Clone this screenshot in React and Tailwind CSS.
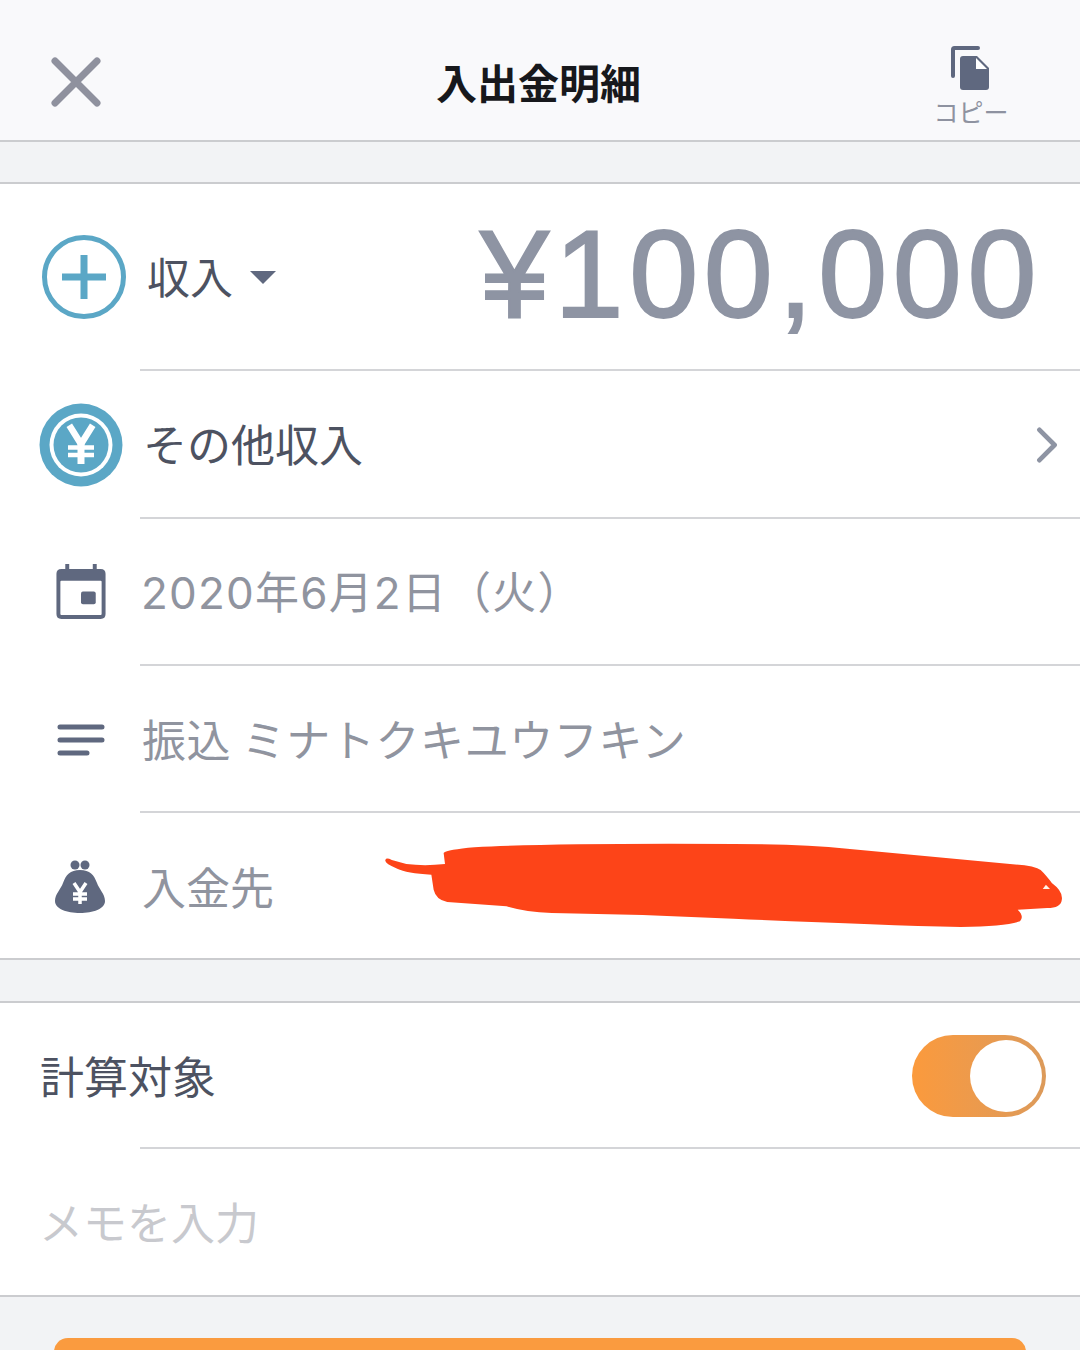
const jp = "font-['Noto_Sans_CJK_JP',sans-serif]";

function Divider() {
  return <div className="ml-[140px] h-[2px] shrink-0 bg-[#d4d5d8]" />;
}

function Edge() {
  return <div className="h-[2px] shrink-0 bg-[#cbcccf]" />;
}

function IconSlot({ children, className = "" }) {
  return <div className={`flex shrink-0 items-center justify-center ${className}`}>{children}</div>;
}

function CloseIcon() {
  return (
    <svg width="50" height="50" viewBox="0 0 50 50" fill="none" stroke="#8f919e" strokeWidth="7" strokeLinecap="round">
      <path d="M4 4 L46 46 M46 4 L4 46" />
    </svg>
  );
}

function CopyIcon() {
  return (
    <svg width="40" height="46" viewBox="0 0 40 46">
      <path d="M2 30 V3.5 Q2 2 3.5 2 H27" fill="none" stroke="#5f687f" strokeWidth="4" strokeLinecap="round" />
      <path d="M12 10 Q9 10 9 13 V41 Q9 44 12 44 H35 Q38 44 38 41 V22 L26 10 Z" fill="#5f687f" />
      <path d="M25 12 V23 H36 Z" fill="#ffffff" />
    </svg>
  );
}

function PlusCircle() {
  return (
    <svg width="86" height="86" viewBox="0 0 86 86" fill="none" stroke="#5ba7c6">
      <circle cx="43" cy="43" r="39.5" strokeWidth="5" />
      <path d="M21 43 H65 M43 21 V65" strokeWidth="7" />
    </svg>
  );
}

function YenCoin() {
  return (
    <svg width="86" height="86" viewBox="0 0 86 86">
      <circle cx="43" cy="43" r="41.5" fill="#5ba7c6" />
      <circle cx="43" cy="43" r="31.5" fill="#ffffff" />
      <circle cx="43" cy="43" r="27.5" fill="#5ba7c6" />
      <path d="M33 26 L43 42 L53 26" fill="none" stroke="#ffffff" strokeWidth="6.5" strokeLinecap="square" />
      <path d="M30 45.5 H56 M30 53 H56" fill="none" stroke="#ffffff" strokeWidth="4.5" />
      <path d="M43 42 V62" fill="none" stroke="#ffffff" strokeWidth="7" />
    </svg>
  );
}

function CalendarIcon() {
  return (
    <svg width="50" height="55" viewBox="0 0 50 56">
      <path d="M9 0 H13 V5 H37 V0 H41 V5 H45 Q50 5 50 10 V51 Q50 56 45 56 H5 Q0 56 0 51 V10 Q0 5 5 5 H9 Z" fill="#5f687f" />
      <rect x="4" y="17" width="42" height="35" rx="1" fill="#ffffff" />
      <rect x="25" y="28" width="15" height="13" rx="2" fill="#5f687f" />
    </svg>
  );
}

function LinesIcon() {
  return (
    <svg width="48" height="34" viewBox="0 0 48 34" fill="none" stroke="#5f687f" strokeWidth="5" strokeLinecap="round">
      <path d="M3 3 H45 M3 16 H45 M3 29 H30" />
    </svg>
  );
}

function PurseIcon() {
  return (
    <svg width="52" height="54" viewBox="0 0 52 54">
      <circle cx="21" cy="5" r="4.5" fill="#5f687f" />
      <circle cx="31" cy="5" r="4.5" fill="#5f687f" />
      <path d="M26 10 C36 10 40 15 43 23 C45 29 51 34 51 41 C51 49 39 53 26 53 C13 53 1 49 1 41 C1 34 7 29 9 23 C12 15 16 10 26 10 Z" fill="#5f687f" />
      <path d="M20 23 L26 32 L32 23 M19 34 H33 M19 39 H33 M26 32 V44" fill="none" stroke="#ffffff" strokeWidth="3.5" />
    </svg>
  );
}

function Scribble() {
  return (
    <svg
      className="absolute left-[370px] top-[15px]"
      width="710"
      height="120"
      viewBox="0 0 1562 360"
      preserveAspectRatio="none"
    >
      <path
        d="M34 95 Q36 88 48 96 L80 108 Q120 115 165 108 L162 75 Q170 65 230 58 Q400 45 800 48 Q950 48 1050 62 L1440 112 Q1475 118 1482 135 Q1495 155 1500 165 Q1525 190 1522 215 Q1520 240 1490 240 L1425 245 Q1440 265 1430 280 Q1400 295 1300 297 Q1100 290 800 272 Q600 258 400 255 Q340 252 300 235 L170 222 Q145 215 140 185 L135 140 Q80 135 60 122 Q30 105 34 95 Z"
        fill="#fd4418"
      />
      <path d="M1487 170 L1496 183 L1480 183 Z" fill="#fff3e8" />
    </svg>
  );
}

export default function App() {
  return (
    <div className={`flex h-[1350px] w-[1080px] flex-col overflow-hidden bg-[#f2f3f5] ${jp}`}>
      <header className="flex h-[140px] shrink-0 items-center justify-between bg-[#f9f9fb]">
        <IconSlot className="ml-[51px] mt-[24px]"><CloseIcon /></IconSlot>
        <h1 className="mt-[22px] ml-[42px] text-[41px] font-bold leading-none text-[#17181c]">入出金明細</h1>
        <div className="mr-[72px] mt-[32px] flex w-[74px] flex-col items-center">
          <CopyIcon />
          <span className="mt-[3px] whitespace-nowrap text-[25px] leading-[32px] text-[#8e92a0]">コピー</span>
        </div>
      </header>
      <Edge />
      <div className="h-[40px] shrink-0" />
      <Edge />

      <section className="shrink-0 bg-white">
        <div className="flex h-[185px] items-center pl-[41px] pr-[38px]">
          <IconSlot className="mt-[1px]"><PlusCircle /></IconSlot>
          <span className="mb-[2px] ml-[20px] text-[43px] leading-none text-[#4d5261]">収入</span>
          <div className="ml-[17px] mt-[1px] h-0 w-0 border-x-[13px] border-t-[13px] border-x-transparent border-t-[#5f687f]" />
          <span className="ml-auto mb-[6px] font-['Liberation_Sans',sans-serif] text-[124px] leading-none tracking-[5.6px] text-[#8e94a3] [-webkit-text-stroke:2px_#8e94a3]">¥100,000</span>
        </div>
        <Divider />
        <div className="flex h-[146px] items-center pl-[38px] pr-[20px]">
          <IconSlot className="mt-[1px]"><YenCoin /></IconSlot>
          <span className="mb-[2px] ml-[19px] text-[44px] leading-none text-[#4d5261]">その他収入</span>
          <svg className="ml-auto mt-[2px]" width="26" height="36" viewBox="0 0 26 38" fill="none" stroke="#8e94a3" strokeWidth="5" strokeLinecap="round" strokeLinejoin="round">
            <path d="M5 3 L21 19 L5 35" />
          </svg>
        </div>
        <Divider />
        <div className="flex h-[145px] items-center pl-[56px]">
          <IconSlot><CalendarIcon /></IconSlot>
          <span className="ml-[35px] mt-[2px] font-['Inter','Noto_Sans_CJK_JP',sans-serif] text-[44px] leading-none tracking-[1.2px] text-[#90949f]">2020年6月2日（火）</span>
        </div>
        <Divider />
        <div className="flex h-[145px] items-center pl-[57px]">
          <IconSlot className="mt-[4px]"><LinesIcon /></IconSlot>
          <span className="mb-[2px] ml-[37px] text-[44px] leading-none tracking-[0.6px] text-[#90949f]">振込 ミナトクキユウフキン</span>
        </div>
        <Divider />
        <div className="relative flex h-[145px] items-center pl-[54px]">
          <IconSlot className="mt-[3px]"><PurseIcon /></IconSlot>
          <span className="ml-[36px] text-[44px] leading-none text-[#90949f]">入金先</span>
          <Scribble />
        </div>
      </section>

      <Edge />
      <div className="h-[41px] shrink-0" />
      <Edge />

      <section className="shrink-0 bg-white">
        <div className="flex h-[144px] items-center pl-[40px] pr-[34px]">
          <span className="text-[44px] leading-none text-[#4d5261]">計算対象</span>
          <div className="ml-auto mt-[1px] flex h-[82px] w-[134px] items-center justify-end rounded-full bg-linear-to-r from-[#fb9a3c] to-[#dc9a5a] pr-[4px]">
            <div className="h-[72px] w-[72px] rounded-full bg-white" />
          </div>
        </div>
        <Divider />
        <div className="flex h-[146px] items-center pl-[39px]">
          <span className="mb-[2px] text-[44px] leading-none text-[#c8c9ce]">メモを入力</span>
        </div>
      </section>

      <Edge />
      <div className="h-[41px] shrink-0" />
      <div className="mx-[54px] h-[60px] shrink-0 rounded-[14px] bg-[#fa9b3f]" />
    </div>
  );
}
